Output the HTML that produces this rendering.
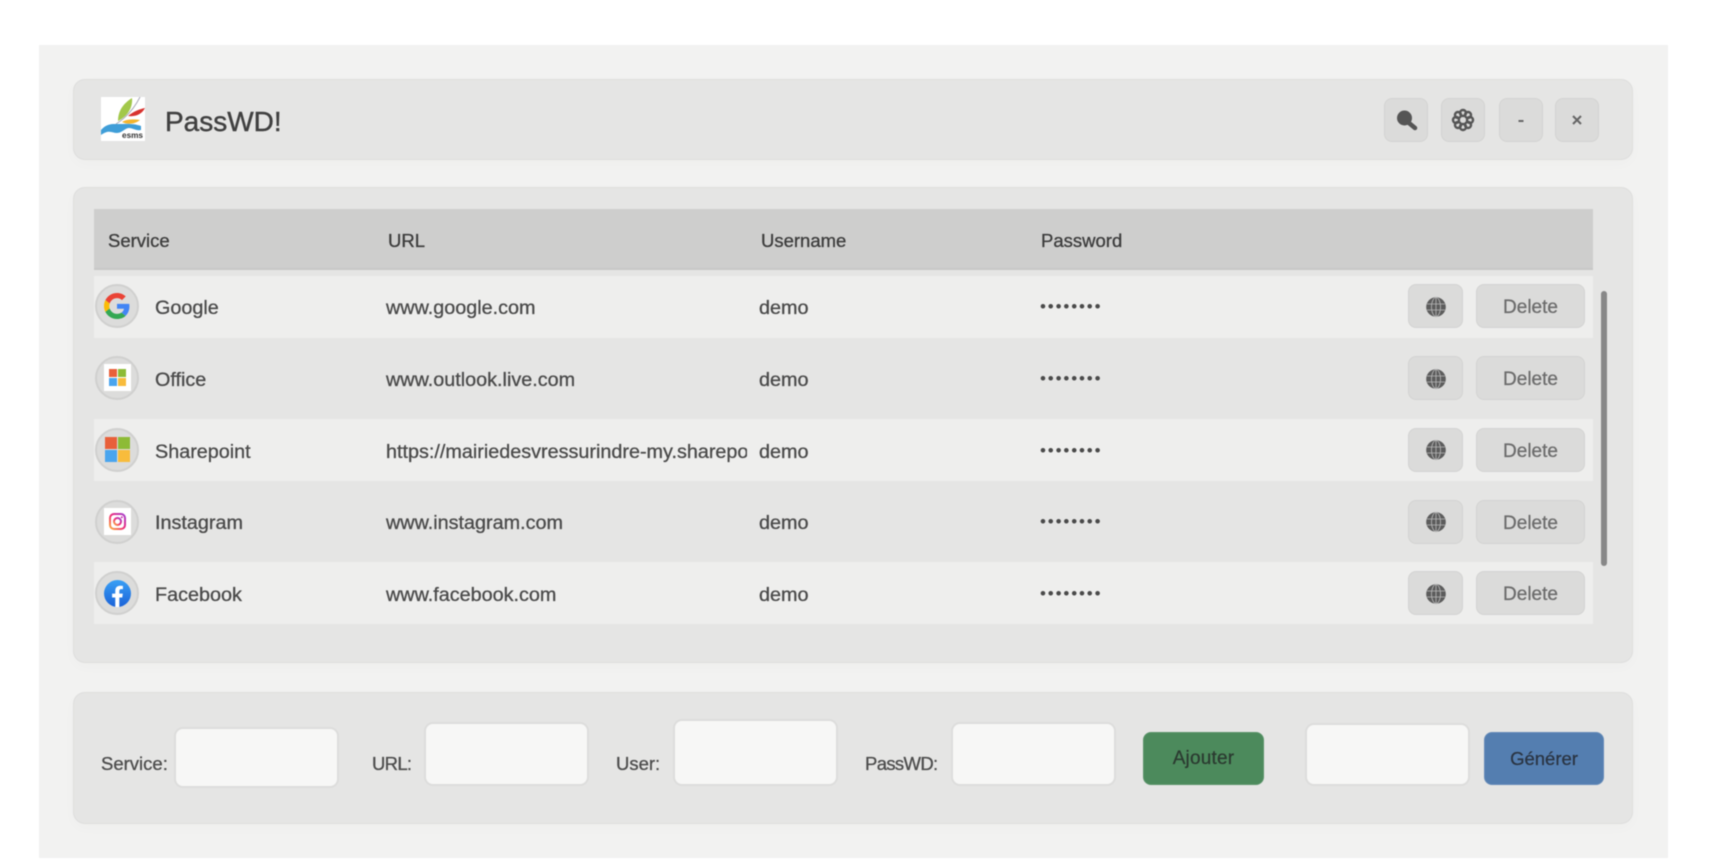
<!DOCTYPE html>
<html><head><meta charset="utf-8"><title>PassWD!</title>
<style>
html,body{margin:0;padding:0;width:1736px;height:868px;overflow:hidden;background:#fff;font-family:"Liberation Sans",sans-serif;color:#4a4a4a}
div,span,svg{position:absolute;box-sizing:border-box}
#wrap{left:0;top:0;width:1736px;height:868px;filter:blur(.55px)}
.panel{background:#e5e5e4;border:1px solid #dededd;border-radius:12px;box-shadow:0 4px 14px rgba(0,0,0,.02)}
.t{white-space:nowrap;font-size:19.8px;line-height:24px;-webkit-text-stroke:.3px #4a4a4a}
.h{font-size:18.5px;color:#3c3c3c;-webkit-text-stroke:.3px #3c3c3c}
.row{left:94px;width:1499px;height:62px}
.c{left:95px;width:44px;height:44px;border-radius:50%;background:#dcdcdb;border:2px solid #d0d0cf}
.b{background:#dbdbda;border:1px solid #d3d3d2;border-radius:8px}
.del{left:1476px;width:109px;height:44px;text-align:center;line-height:46px;font-size:19px;color:#6c6c6c;-webkit-text-stroke:.3px #6c6c6c}
.gb{left:1408px;width:55px;height:44px}
.inp{background:#f7f7f6;border:2px solid #dddddc;border-radius:9px}
.lab{font-size:18.5px;line-height:24px;white-space:nowrap;color:#4c4c4c;-webkit-text-stroke:.3px #4c4c4c}
.dots{font-size:17px;letter-spacing:1.85px;-webkit-text-stroke:0}
</style></head><body>
<div id="wrap">
<div style="left:39px;top:45px;width:1629px;height:813px;background:#f2f2f1"></div>

<div class="panel" style="left:73px;top:79px;width:1560px;height:81px"></div>
<svg style="left:101px;top:97px" width="44" height="44" viewBox="0 0 44 44">
<rect width="44" height="44" fill="#fff"/>
<path d="M17 24C17 13 23 6 31 1c1 9-4 18-14 23z" fill="#a2c84a"/>
<path d="M27 19c6-5 12-7 17-8-3 6-9 9-17 8z" fill="#d8322e"/>
<path d="M21 25c5-3 12-3 18-2-5 4-12 5-18 2z" fill="#f3b52e"/>
<path d="M15 27C26 20 34 10 39 0" stroke="#a9a9b8" stroke-width="1" fill="none"/>
<path d="M0 33c6-7 12-6 18-6s14-1 22 2v4c-5 1-8-2-12-2s-7 5-12 5-8-4-16 2z" fill="#3f9ed8"/>
<text x="21" y="41" font-family="Liberation Sans" font-size="8" font-weight="700" fill="#333" textLength="21" lengthAdjust="spacingAndGlyphs">esms</text>
</svg>
<div class="t" style="left:165px;top:104px;font-size:28px;line-height:36px;color:#404040;-webkit-text-stroke:.4px #404040">PassWD!</div>

<div class="b" style="left:1384px;top:98px;width:44px;height:44px"></div>
<svg style="left:1384px;top:98px" width="44" height="44" viewBox="0 0 44 44"><circle cx="20.500" cy="20" r="7.500" fill="#555"/><path d="M25 25l6 5" stroke="#555" stroke-width="4.500" stroke-linecap="round"/></svg>
<div class="b" style="left:1441px;top:98px;width:44px;height:44px"></div>
<svg style="left:1441px;top:98px" width="44" height="44" viewBox="0 0 44 44"><g fill="none" stroke="#555" stroke-width="2.400"><circle cx="22" cy="15" r="3"/><circle cx="22" cy="29" r="3"/><circle cx="15" cy="22" r="3"/><circle cx="29" cy="22" r="3"/><circle cx="17" cy="17" r="3"/><circle cx="27" cy="17" r="3"/><circle cx="17" cy="27" r="3"/><circle cx="27" cy="27" r="3"/></g></svg>
<div class="b" style="left:1499px;top:98px;width:44px;height:44px"></div>
<svg style="left:1499px;top:98px" width="44" height="44" viewBox="0 0 44 44"><path d="M19.500 23h5" stroke="#666" stroke-width="2"/></svg>
<div class="b" style="left:1555px;top:98px;width:44px;height:44px"></div>
<svg style="left:1555px;top:98px" width="44" height="44" viewBox="0 0 44 44"><path d="M18 18l8 8M26 18l-8 8" stroke="#666" stroke-width="2"/></svg>

<div class="panel" style="left:73px;top:187px;width:1560px;height:476px"></div>
<div style="left:94px;top:209px;width:1499px;height:61px;background:#cececd;border-bottom:2px solid #c8c8c7"></div>
<div class="t h" style="left:108px;top:229px">Service</div>
<div class="t h" style="left:388px;top:229px">URL</div>
<div class="t h" style="left:761px;top:229px">Username</div>
<div class="t h" style="left:1041px;top:229px">Password</div>

<div class="row" style="top:276px;background:#eeeeed"></div>
<div class="row" style="top:419px;background:#eeeeed"></div>
<div class="row" style="top:562px;background:#eeeeed"></div>

<!-- Row 1 -->
<div class="c" style="top:284px"></div>
<svg style="left:104px;top:293px" width="26" height="26" viewBox="0 0 48 48"><path fill="#EA4335" d="M24 9.500c3.540 0 6.710 1.220 9.210 3.600l6.850-6.850C35.900 2.380 30.470 0 24 0 14.620 0 6.510 5.380 2.560 13.220l7.980 6.190C12.430 13.720 17.740 9.500 24 9.500z"/><path fill="#4285F4" d="M46.980 24.550c0-1.570-.15-3.090-.38-4.550H24v9.020h12.940c-.58 2.960-2.260 5.480-4.780 7.180l7.730 6c4.510-4.180 7.090-10.360 7.090-17.650z"/><path fill="#FBBC05" d="M10.530 28.590c-.48-1.450-.76-2.990-.76-4.590s.27-3.140.76-4.590l-7.980-6.190C.92 16.460 0 20.120 0 24c0 3.880.92 7.540 2.560 10.780l7.970-6.190z"/><path fill="#34A853" d="M24 48c6.480 0 11.930-2.130 15.890-5.810l-7.730-6c-2.150 1.450-4.920 2.300-8.160 2.300-6.260 0-11.570-4.220-13.470-9.910l-7.980 6.190C6.510 42.620 14.620 48 24 48z"/></svg>
<div class="t" style="left:155px;top:296px">Google</div>
<div class="t" style="left:386px;top:296px">www.google.com</div>
<div class="t" style="left:759px;top:296px">demo</div>
<div class="t dots" style="left:1040px;top:295px">••••••••</div>

<!-- Row 2 -->
<div class="c" style="top:356px"></div>
<svg style="left:104px;top:364px" width="27" height="27" viewBox="0 0 27 27"><rect width="27" height="27" fill="#fff"/><rect x="5" y="5" width="8" height="8" fill="#e8603a"/><rect x="14" y="5" width="8" height="8" fill="#8dbb36"/><rect x="5" y="14" width="8" height="8" fill="#4aa5ee"/><rect x="14" y="14" width="8" height="8" fill="#f8bc3c"/></svg>
<div class="t" style="left:155px;top:368px">Office</div>
<div class="t" style="left:386px;top:368px">www.outlook.live.com</div>
<div class="t" style="left:759px;top:368px">demo</div>
<div class="t dots" style="left:1040px;top:367px">••••••••</div>

<!-- Row 3 -->
<div class="c" style="top:428px"></div>
<svg style="left:104px;top:436px" width="27" height="27" viewBox="0 0 27 27"><rect x="1" y="1" width="12" height="12" fill="#e8603a"/><rect x="14" y="1" width="12" height="12" fill="#8dbb36"/><rect x="1" y="14" width="12" height="12" fill="#4aa5ee"/><rect x="14" y="14" width="12" height="12" fill="#f8bc3c"/></svg>
<div class="t" style="left:155px;top:440px">Sharepoint</div>
<div class="t" style="left:386px;top:440px;width:361px;overflow:hidden">https://mairiedesvressurindre-my.sharepoint.com</div>
<div class="t" style="left:759px;top:440px">demo</div>
<div class="t dots" style="left:1040px;top:439px">••••••••</div>

<!-- Row 4 -->
<div class="c" style="top:500px"></div>
<svg style="left:104px;top:508px" width="27" height="27" viewBox="0 0 27 27"><defs><linearGradient id="ig" x1="0" y1="1" x2="1" y2="0"><stop offset="0" stop-color="#fbb03b"/><stop offset=".5" stop-color="#ee2a7b"/><stop offset="1" stop-color="#a33fd0"/></linearGradient></defs><rect width="27" height="27" fill="#fff"/><rect x="6" y="6" width="15" height="15" rx="4" fill="none" stroke="url(#ig)" stroke-width="2"/><circle cx="13.500" cy="13.500" r="3.500" fill="none" stroke="url(#ig)" stroke-width="2"/><circle cx="17.800" cy="9.200" r="1" fill="#c837ab"/></svg>
<div class="t" style="left:155px;top:511px">Instagram</div>
<div class="t" style="left:386px;top:511px">www.instagram.com</div>
<div class="t" style="left:759px;top:511px">demo</div>
<div class="t dots" style="left:1040px;top:510px">••••••••</div>

<!-- Row 5 -->
<div class="c" style="top:571px"></div>
<svg style="left:104px;top:580px" width="27" height="27" viewBox="0 0 28 28"><defs><linearGradient id="fb" x1="0" y1="0" x2="0" y2="1"><stop offset="0" stop-color="#3aa0f5"/><stop offset="1" stop-color="#1a62d8"/></linearGradient></defs><circle cx="14" cy="14" r="14" fill="url(#fb)"/><path d="M11.700 28V18.200H8.400v-4.100h3.300v-3c0-3.400 2-5.200 5-5.200 1.400 0 2.900.25 2.900.25v3.300h-1.600c-1.600 0-2.100 1-2.100 2v2.650h3.600l-.6 4.100h-3V28z" fill="#fff"/></svg>
<div class="t" style="left:155px;top:583px">Facebook</div>
<div class="t" style="left:386px;top:583px">www.facebook.com</div>
<div class="t" style="left:759px;top:583px">demo</div>
<div class="t dots" style="left:1040px;top:582px">••••••••</div>

<!-- Row buttons -->
<div class="b gb" style="top:284px"></div><div class="b del" style="top:284px">Delete</div>
<div class="b gb" style="top:356px"></div><div class="b del" style="top:356px">Delete</div>
<div class="b gb" style="top:428px"></div><div class="b del" style="top:428px">Delete</div>
<div class="b gb" style="top:500px"></div><div class="b del" style="top:500px">Delete</div>
<div class="b gb" style="top:571px"></div><div class="b del" style="top:571px">Delete</div>
<svg style="left:1426px;top:297px" width="20" height="20" viewBox="0 0 20 20"><circle cx="10" cy="10" r="9.800" fill="#5c5c5c"/><g fill="none" stroke="#b8b8b8" stroke-width=".8"><ellipse cx="10" cy="10" rx="4.500" ry="9.500"/><path d="M10 .5v19M1 7h18M1 13h18"/></g></svg>
<svg style="left:1426px;top:369px" width="20" height="20" viewBox="0 0 20 20"><circle cx="10" cy="10" r="9.800" fill="#5c5c5c"/><g fill="none" stroke="#b8b8b8" stroke-width=".8"><ellipse cx="10" cy="10" rx="4.500" ry="9.500"/><path d="M10 .5v19M1 7h18M1 13h18"/></g></svg>
<svg style="left:1426px;top:440px" width="20" height="20" viewBox="0 0 20 20"><circle cx="10" cy="10" r="9.800" fill="#5c5c5c"/><g fill="none" stroke="#b8b8b8" stroke-width=".8"><ellipse cx="10" cy="10" rx="4.500" ry="9.500"/><path d="M10 .5v19M1 7h18M1 13h18"/></g></svg>
<svg style="left:1426px;top:512px" width="20" height="20" viewBox="0 0 20 20"><circle cx="10" cy="10" r="9.800" fill="#5c5c5c"/><g fill="none" stroke="#b8b8b8" stroke-width=".8"><ellipse cx="10" cy="10" rx="4.500" ry="9.500"/><path d="M10 .5v19M1 7h18M1 13h18"/></g></svg>
<svg style="left:1426px;top:584px" width="20" height="20" viewBox="0 0 20 20"><circle cx="10" cy="10" r="9.800" fill="#5c5c5c"/><g fill="none" stroke="#b8b8b8" stroke-width=".8"><ellipse cx="10" cy="10" rx="4.500" ry="9.500"/><path d="M10 .5v19M1 7h18M1 13h18"/></g></svg>

<div style="left:1601px;top:291px;width:6px;height:275px;border-radius:3px;background:#888"></div>

<!-- Bottom panel -->
<div class="panel" style="left:73px;top:692px;width:1560px;height:132px"></div>
<div class="lab" style="left:101px;top:752px">Service:</div>
<div class="inp" style="left:174px;top:727px;width:165px;height:61px"></div>
<div class="lab" style="left:372px;top:752px;letter-spacing:-.7px">URL:</div>
<div class="inp" style="left:424px;top:722px;width:165px;height:64px"></div>
<div class="lab" style="left:616px;top:752px">User:</div>
<div class="inp" style="left:673px;top:719px;width:165px;height:67px"></div>
<div class="lab" style="left:865px;top:752px;letter-spacing:-.65px">PassWD:</div>
<div class="inp" style="left:951px;top:722px;width:165px;height:64px"></div>
<div style="left:1143px;top:732px;width:121px;height:53px;background:#4c8a5c;border-radius:8px;border:1px solid #5a9469;text-align:center;line-height:52px;font-size:19px;letter-spacing:.2px;color:#2b3a30;-webkit-text-stroke:.25px #2b3a30">Ajouter</div>
<div class="inp" style="left:1305px;top:723px;width:165px;height:63px"></div>
<div style="left:1484px;top:732px;width:120px;height:53px;background:#547eb0;border-radius:8px;border:1px solid #648ab8;text-align:center;line-height:52px;font-size:18.5px;color:#2a3442;-webkit-text-stroke:.25px #2a3442">Générer</div>
</div>
</body></html>
